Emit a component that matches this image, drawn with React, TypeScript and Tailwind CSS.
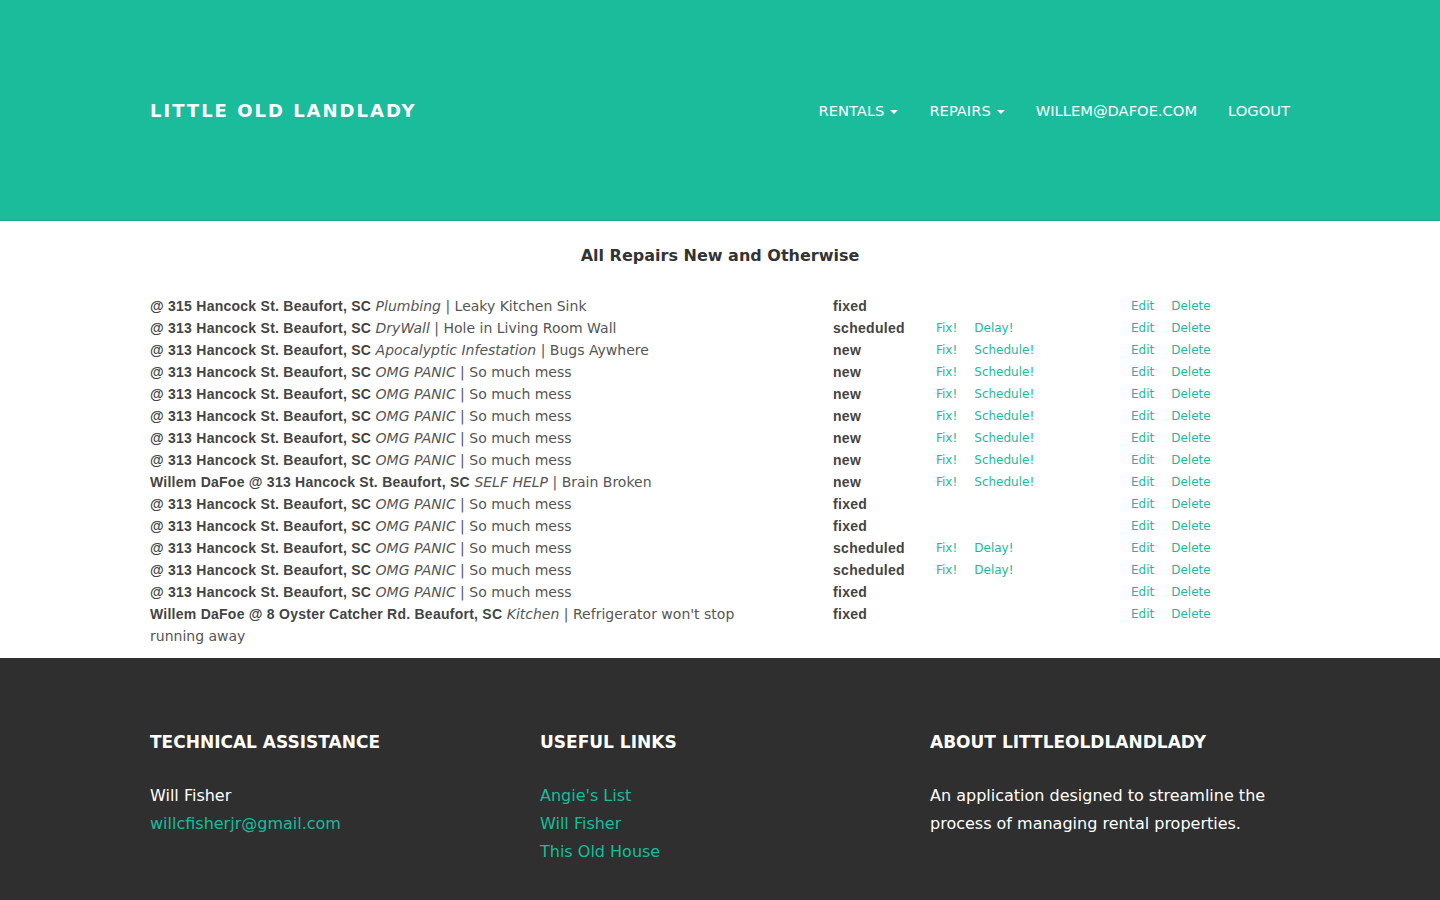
const font = "font-['DejaVu_Sans','Liberation_Sans',sans-serif]";
const boldFont = "font-['Liberation_Sans','DejaVu_Sans',sans-serif] font-bold";

type Repair = {
  who?: string;
  where: string;
  cat: string;
  desc: string;
  status: "fixed" | "scheduled" | "new";
};

const omg = { where: "313 Hancock St. Beaufort, SC", cat: "OMG PANIC", desc: "So much mess" };

const repairs: Repair[] = [
  { where: "315 Hancock St. Beaufort, SC", cat: "Plumbing", desc: "Leaky Kitchen Sink", status: "fixed" },
  { where: "313 Hancock St. Beaufort, SC", cat: "DryWall", desc: "Hole in Living Room Wall", status: "scheduled" },
  { where: "313 Hancock St. Beaufort, SC", cat: "Apocalyptic Infestation", desc: "Bugs Aywhere", status: "new" },
  { ...omg, status: "new" },
  { ...omg, status: "new" },
  { ...omg, status: "new" },
  { ...omg, status: "new" },
  { ...omg, status: "new" },
  { who: "Willem DaFoe", where: "313 Hancock St. Beaufort, SC", cat: "SELF HELP", desc: "Brain Broken", status: "new" },
  { ...omg, status: "fixed" },
  { ...omg, status: "fixed" },
  { ...omg, status: "scheduled" },
  { ...omg, status: "scheduled" },
  { ...omg, status: "fixed" },
  { who: "Willem DaFoe", where: "8 Oyster Catcher Rd. Beaufort, SC", cat: "Kitchen", desc: "Refrigerator won't stop running away", status: "fixed" },
];

function Caret() {
  return <span className="ml-1.5 inline-block h-0 w-0 border-x-4 border-t-4 border-x-transparent border-t-white align-middle" />;
}

function Header() {
  return (
    <header className="bg-[#1abc9c] border-b border-[#17a98c]">
      <div className="mx-auto flex h-[220px] w-[1140px] items-center justify-between">
        <a className="text-[18px] font-bold tracking-[2px] text-white">LITTLE OLD LANDLADY</a>
        <nav className="flex items-center gap-[31px] pt-[2px] text-[14.7px] text-white">
          <a>RENTALS<Caret /></a>
          <a>REPAIRS<Caret /></a>
          <a>WILLEM@DAFOE.COM</a>
          <a>LOGOUT</a>
        </nav>
      </div>
    </header>
  );
}

function RepairRow({ r }: { r: Repair }) {
  return (
    <div className="flex items-start leading-[22px]">
      <div className="w-[683px] pr-[50px] text-[14px] text-[#555]">
        <b className={`${boldFont} tracking-[0.25px] text-[#444]`}>
          {r.who ? `${r.who} ` : ""}@ {r.where}
        </b>{" "}
        <em>{r.cat}</em> | {r.desc}
      </div>
      <div className={`${boldFont} w-[103px] text-[14px] tracking-[0.3px] text-[#444]`}>{r.status}</div>
      <div className="flex w-[195px] gap-[17px] text-[12px] text-[#18bc9c]">
        {r.status !== "fixed" && (
          <>
            <a>Fix!</a>
            <a>{r.status === "new" ? "Schedule!" : "Delay!"}</a>
          </>
        )}
      </div>
      <div className="flex gap-[17px] text-[12px] text-[#18bc9c]">
        <a>Edit</a>
        <a>Delete</a>
      </div>
    </div>
  );
}

function Footer() {
  return (
    <footer className="bg-[#2f2f2f] pt-[71px] pb-[60px] text-white">
      <div className="mx-auto grid w-[1170px] grid-cols-3">
        <div className="px-[15px]">
          <h3 className="text-[17px] font-bold uppercase leading-[26px]">Technical Assistance</h3>
          <div className="mt-[27px] text-[16px] leading-[28px]">
            <p>Will Fisher</p>
            <a className="text-[#18bc9c]">willcfisherjr@gmail.com</a>
          </div>
        </div>
        <div className="px-[15px]">
          <h3 className="text-[17px] font-bold uppercase leading-[26px]">Useful Links</h3>
          <div className="mt-[27px] flex flex-col text-[16px] leading-[28px] text-[#18bc9c]">
            <a>Angie's List</a>
            <a>Will Fisher</a>
            <a>This Old House</a>
          </div>
        </div>
        <div className="px-[15px]">
          <h3 className="text-[17px] font-bold uppercase leading-[26px]">About LittleOldLandlady</h3>
          <p className="mt-[27px] text-[16px] leading-[28px]">
            An application designed to streamline the process of managing rental properties.
          </p>
        </div>
      </div>
    </footer>
  );
}

export default function App() {
  return (
    <div className={`${font} min-h-screen bg-white`}>
      <Header />
      <main className="mx-auto w-[1140px] pt-[22px] pb-[11px]">
        <h2 className="text-center text-[16px] font-bold leading-[26px] text-[#333]">All Repairs New and Otherwise</h2>
        <div className="mt-[26px]">
          {repairs.map((r, i) => (
            <RepairRow key={i} r={r} />
          ))}
        </div>
      </main>
      <Footer />
    </div>
  );
}
